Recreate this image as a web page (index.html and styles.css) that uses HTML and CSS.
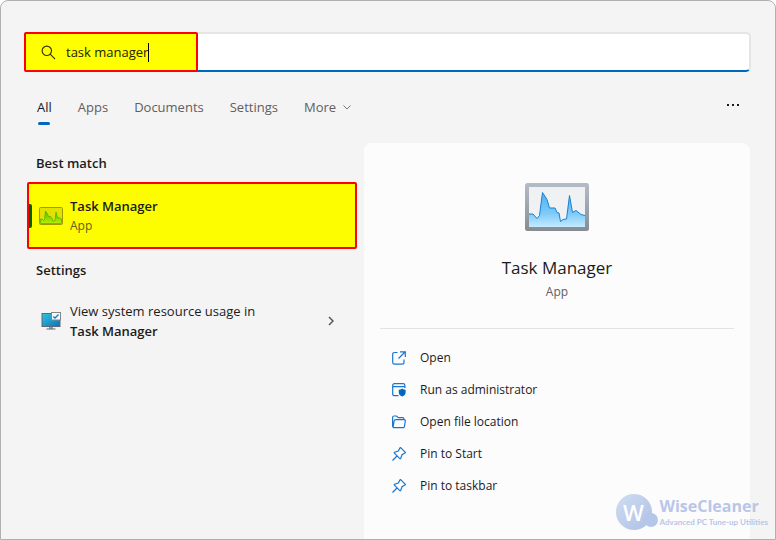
FILE: index.html
```html
<!DOCTYPE html>
<html lang="en">
<head>
  <meta charset="UTF-8" />
  <meta name="viewport" content="width=device-width, initial-scale=1" />
  <title>Search - Task Manager</title>
  <link rel="stylesheet" href="styles.css">
</head>
<body>
  <div class="window">
    <form class="search">
      <label class="query" for="q">
        <svg class="search-icon" viewBox="0 0 16 16" aria-hidden="true"><circle cx="6.2" cy="6.2" r="5" /><path d="M9.8 9.8L15 15" /></svg>
        <input id="q" type="text" value="task manager" aria-label="Search" />
        <span class="caret"></span>
      </label>
    </form>

    <nav class="tabs">
      <a class="tab active" href="#all">All</a>
      <a class="tab" href="#apps">Apps</a>
      <a class="tab" href="#documents">Documents</a>
      <a class="tab" href="#settings">Settings</a>
      <button class="tab more" type="button">More
        <svg viewBox="0 0 8 5" aria-hidden="true"><path d="M.5.5L4 4L7.500.5" /></svg>
      </button>
      <button class="options" type="button" aria-label="Options">
        <svg viewBox="0 0 14 4" aria-hidden="true"><rect x="1" y="1" width="2" height="2" /><rect x="6" y="1" width="2" height="2" /><rect x="11" y="1" width="2" height="2" /></svg>
      </button>
    </nav>

    <main>
      <section class="results">
        <h2>Best match</h2>
        <a class="best" href="#task-manager">
          <svg class="best-icon" viewBox="0 0 24 18" aria-hidden="true">
            <defs>
              <linearGradient id="green" x1="0" y1="0" x2="0" y2="1"><stop offset="0" stop-color="#55bd00" /><stop offset="1" stop-color="#b8f000" /></linearGradient>
            </defs>
            <rect x=".5" y=".5" width="23" height="17" rx="1" fill="#e2e200" stroke="#9c9c00" />
            <path d="M1.500 12L3 12L4.500 13.500L5.500 12.500L6.500 4L8.500 7L9.500 9.500H11.500L13 11.500L14 14.500L16 13.500L17 5L18.500 11L20 10.500L22.500 12V16.500H1.500Z" fill="url(#green)" stroke="#4aae00" stroke-width=".7" />
          </svg>
          <span class="text"><strong>Task Manager</strong><small>App</small></span>
        </a>

        <h2>Settings</h2>
        <a class="result" href="#resource-usage">
          <svg class="monitor" viewBox="0 0 20 18" aria-hidden="true">
            <defs>
              <linearGradient id="screen" x1="0" y1="0" x2="1" y2="1"><stop offset="0" stop-color="#32c4dd" /><stop offset="1" stop-color="#0874bd" /></linearGradient>
            </defs>
            <rect x="1" y="1.500" width="18" height="13" fill="url(#screen)" stroke="#5d6972" />
            <path d="M8 15H12V17H8Z" fill="#939ba1" />
            <path d="M5.500 17H14.500" stroke="#5d6972" />
            <rect x="10.500" y=".5" width="9" height="7.500" fill="#f7f7f7" stroke="#858585" />
            <path d="M12.300 4.500L14 6L17.500 2.500" fill="none" stroke="#1474d4" stroke-width="1.300" />
          </svg>
          <span class="text">View system resource usage in <strong>Task Manager</strong></span>
          <svg class="chevron" viewBox="0 0 6 10" aria-hidden="true"><path d="M1 1L5 5L1 9" /></svg>
        </a>
      </section>

      <section class="details">
        <svg class="app-icon" viewBox="0 0 64 48" aria-hidden="true">
          <defs>
            <linearGradient id="frame" x1="0" y1="0" x2="0" y2="1"><stop offset="0" stop-color="#b4bcc8" /><stop offset="1" stop-color="#858d93" /></linearGradient>
            <linearGradient id="chart" x1="0" y1="0" x2="0" y2="1"><stop offset="0" stop-color="#4eb2ec" /><stop offset=".6" stop-color="#7ccafa" /><stop offset="1" stop-color="#c4eaff" /></linearGradient>
          </defs>
          <rect width="64" height="48" rx="2.500" fill="url(#frame)" />
          <rect x="4" y="4" width="56" height="40" fill="#f0f1f3" />
          <path d="M4 31H8L12 35.500L14.500 32.500L17.500 9.500L22 16.500L24.500 25H30L32 29.500L34 30L35.500 38.500L38 36.500L41.500 36L44.500 12.500L47.500 29.500L51 27.500L56 31.500L60 32.500V44H4Z" fill="url(#chart)" />
          <path d="M4 31H8L12 35.500L14.500 32.500L17.500 9.500L22 16.500L24.500 25H30L32 29.500L34 30L35.500 38.500L38 36.500L41.500 36L44.500 12.500L47.500 29.500L51 27.500L56 31.500L60 32.500" fill="none" stroke="#1a80d4" />
        </svg>
        <h1>Task Manager</h1>
        <p>App</p>
        <hr>
        <ul class="actions">
          <li><button type="button">
            <svg viewBox="0 0 14 14" aria-hidden="true"><path d="M5.500 1.500H2.500Q.7 1.500.7 3.300V11.300Q.7 13.200 2.500 13.200H10Q12 13.200 12 11.300V8.500M8 .8H13.300V6M13 1L6.500 7.500" /></svg>
            Open</button></li>
          <li><button type="button">
            <svg viewBox="0 0 14 14" aria-hidden="true"><path d="M6.500 12.700H2.500Q.7 12.700.7 11V2.500Q.7.700 2.500.7H11Q12.900.7 12.900 2.500V5M.7 3.700H12.900" /><path class="solid" d="M10.200 5.500Q11.700 6.800 13.600 6.800V9.500Q13.500 12.300 10.200 13.500Q6.900 12.300 6.800 9.500V6.800Q8.700 6.800 10.200 5.500Z" /></svg>
            Run as administrator</button></li>
          <li><button type="button">
            <svg viewBox="0 0 14 14" aria-hidden="true"><path d="M1.200 12.300Q.6 12 .6 11V2.500Q.6 1 2 1H4.500L6.300 2.700H10.700Q12 2.700 12 4.500M3.800 4.700H12Q13.600 4.700 13.300 6L12.500 11.300Q12.300 12.700 11 12.700H2Q1 12.700 1.200 11.500L2.100 6Q2.300 4.700 3.800 4.700Z" /></svg>
            Open file location</button></li>
          <li><button type="button">
            <svg viewBox="0 0 14 14" aria-hidden="true"><path d="M8.700.7L13.300 5.300Q13.500 5.800 13 6.100L10 7.700L8.700 11.500Q8.300 12 7.800 11.600L2.400 6.200Q2 5.700 2.600 5.300L6.300 4L8 .9Q8.300.4 8.700.7ZM5 9L.5 13.500" /></svg>
            Pin to Start</button></li>
          <li><button type="button">
            <svg viewBox="0 0 14 14" aria-hidden="true"><path d="M8.700.7L13.300 5.300Q13.500 5.800 13 6.100L10 7.700L8.700 11.500Q8.300 12 7.800 11.600L2.400 6.200Q2 5.700 2.600 5.300L6.300 4L8 .9Q8.300.4 8.700.7ZM5 9L.5 13.500" /></svg>
            Pin to taskbar</button></li>
        </ul>
      </section>
    </main>

    <div class="watermark">
      <div class="badge">W</div>
      <div class="brand"><b>WiseCleaner</b><span>Advanced PC Tune-up Utilities</span></div>
    </div>
  </div>
</body>
</html>
```
FILE: styles.css
```css
:root {
  --accent: #0067c0;
  --text: #1b1b1b;
  --muted: #606060;
  --mark: #fdfd00;
}

* {
  box-sizing: border-box;
}

body {
  margin: 0;
  background: #fff;
  color: var(--text);
  font: 13px/20px "Open Sans", "Noto Sans", sans-serif;
}

a {
  color: inherit;
  text-decoration: none;
}

button {
  padding: 0;
  border: none;
  background: none;
  color: inherit;
  font: inherit;
  cursor: pointer;
}

h1, h2, p, ul {
  margin: 0;
  padding: 0;
}

svg {
  flex: none;
}

.window {
  position: relative;
  display: flex;
  flex-direction: column;
  min-height: 100vh;
  padding: 31px 24px 0 23px;
  border: 1px solid #b0b0b0;
  border-radius: 8px 8px 0 0;
  background: #f4f4f4;
}

/* search box */
.search {
  display: flex;
  height: 40px;
  border: 2px solid #e5e5e5;
  border-bottom-color: var(--accent);
  border-radius: 5px;
  background: #fff;
}

.query {
  display: flex;
  align-items: center;
  width: 174px;
  margin: -2px;
  padding-left: 15px;
  border: 2px solid #f00;
  border-radius: 2px;
  background: #ff0;
}

.search-icon {
  width: 15px;
  height: 15px;
  margin-right: 10px;
  fill: none;
  stroke: #333300;
  stroke-width: 1.2;
}

.query input {
  field-sizing: content;
  padding: 0;
  border: none;
  outline: none;
  background: none;
  color: #222200;
  font: inherit;
}

.caret {
  width: 1px;
  height: 19px;
  background: #000;
}

/* filter tabs */
.tabs {
  display: flex;
  align-items: flex-start;
  gap: 26px;
  margin: 25px 11px 0 13px;
}

.tab {
  color: var(--muted);
}

.active {
  color: var(--text);
}

.active::after {
  content: "";
  display: block;
  width: 12px;
  height: 3px;
  margin: 5px auto 0;
  border-radius: 2px;
  background: var(--accent);
}

.more {
  display: flex;
  align-items: center;
  gap: 7px;
}

.more svg {
  width: 8px;
  height: 5px;
  fill: none;
  stroke: #777;
}

.options {
  margin-left: auto;
  line-height: 0;
  padding: 5px 0;
}

.options svg {
  width: 14px;
  height: 4px;
  fill: var(--text);
}

main {
  flex: 1;
  display: grid;
  grid-template-columns: 333fr 386fr;
  gap: 7px;
  margin: 18px 1px 0 0;
}

h2 {
  padding-left: 12px;
  font-size: 13px;
  font-weight: 600;
  line-height: 20px;
}

strong {
  font-weight: 600;
}

.results {
  padding-top: 10px;
}

.best,
.result {
  display: flex;
  align-items: center;
}

.best {
  height: 67px;
  margin: 9px 0 11px 3px;
  border: 2px solid #f00;
  border-radius: 2px;
  background: var(--mark);
}

.best::before {
  content: "";
  width: 3px;
  height: 24px;
  border-radius: 0 2px 2px 0;
  background: #006400;
}

.best-icon {
  width: 24px;
  height: 18px;
  margin: 0 7px;
}

.best .text {
  display: flex;
  flex-direction: column;
}

small {
  color: #5f5f1a;
  font-size: 12px;
}

.result {
  margin-top: 21px;
  padding: 0 23px 0 17px;
}

.monitor {
  width: 20px;
  height: 18px;
  margin-right: 9px;
}

.result .text {
  flex: 1;
  padding-right: 60px;
}

.chevron {
  width: 6px;
  height: 10px;
  fill: none;
  stroke: #555;
  stroke-width: 1.5;
}

/* app details */
.details {
  display: flex;
  flex-direction: column;
  align-items: center;
  padding: 40px 16px 0;
  border-radius: 8px 8px 0 0;
  background: #fcfcfc;
}

.app-icon {
  width: 64px;
  height: 48px;
}

h1 {
  margin-top: 25px;
  font-size: 17px;
  font-weight: 400;
  line-height: 24px;
}

.details p {
  margin-top: 2px;
  color: var(--muted);
  font-size: 12px;
}

hr {
  width: 100%;
  margin: 26px 0 13px;
  border: none;
  border-top: 1px solid #e3e3e3;
}

.actions {
  width: 100%;
  list-style: none;
}

.actions button {
  display: flex;
  align-items: center;
  gap: 14px;
  width: 100%;
  height: 32px;
  padding-left: 12px;
  font-size: 12px;
}

.actions svg {
  width: 14px;
  height: 14px;
  fill: none;
  stroke: #1a76cc;
  stroke-width: 1.2;
}

.actions .solid {
  fill: var(--accent);
  stroke: none;
}

/* sits over the corner of the window */
.watermark {
  position: absolute;
  right: 7px;
  bottom: 9px;
  display: flex;
  align-items: center;
  gap: 8px;
  color: #b9c6e8;
}

.badge {
  position: relative;
  width: 36px;
  height: 36px;
  border-radius: 50%;
  background: linear-gradient(135deg, #d0dcf1, #adc1e6);
  color: #fff;
  font-size: 22px;
  font-weight: 600;
  line-height: 36px;
  text-align: center;
}

.badge::after {
  content: "";
  position: absolute;
  right: -6px;
  bottom: 3px;
  width: 14px;
  height: 14px;
  border-radius: 50%;
  background: #b5c7e8;
}

.brand {
  display: flex;
  flex-direction: column;
}

.brand b {
  font-size: 16px;
  line-height: 20px;
}

.brand span {
  font: bold 8px/12px Lato, sans-serif;
}
```
